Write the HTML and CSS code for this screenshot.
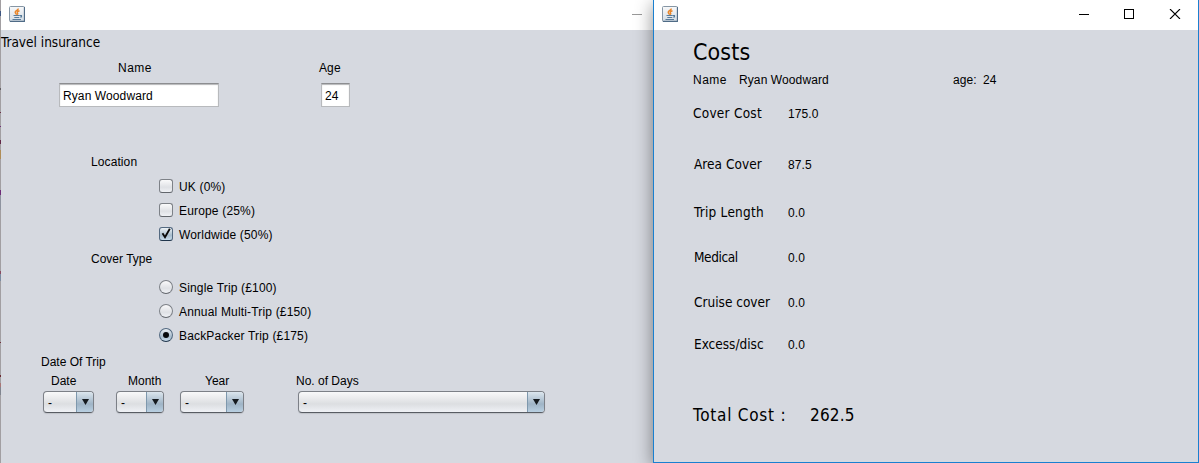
FILE: index.html
```html
<!DOCTYPE html>
<html lang="en">
<head>
<meta charset="utf-8">
<title>Travel insurance</title>
<link rel="stylesheet" href="styles.css">
</head>
<body>
<svg width="0" height="0" class="defs">
  <defs>
    <linearGradient id="tile" x1="0" y1="0" x2="0" y2="1"><stop offset="0" stop-color="#f8f9fa"/><stop offset="1" stop-color="#d3dce4"/></linearGradient>
    <symbol id="java" viewBox="0 0 16 16">
      <rect x=".5" y=".5" width="15" height="15" rx="1" fill="url(#tile)" stroke="#8696a5"/>
      <path d="M1 15.4h14.4V1" fill="none" stroke="#4f6b86" stroke-width="1.1"/>
      <path d="M9.300 2.500C9.600 4.200 5.900 4.500 6.200 6.400c.1 1 1.200 1.500 1.500 2.400M10.500 4.800C8.300 5.400 7.700 6.100 8.500 7c.5.600.2 1.300-.3 1.700" fill="none" stroke="#e9862a" stroke-width="1.400"/>
      <path d="M4.500 9.500h6.300M5.300 11.500h5M3.500 13.500h8.500M11 9.500h1.500v1.500H11" fill="none" stroke="#587c9b" stroke-width="1.100"/>
    </symbol>
  </defs>
</svg>
<div class="desktop">
  <section class="window form">
    <header class="titlebar">
      <svg class="java"><use href="#java"/></svg>
      <svg class="min" width="10" height="1"><rect width="10" height="1" fill="#999"/></svg>
    </header>
    <h1 class="heading">Travel insurance</h1>
    <div class="labels"><label class="name-label wide">Name</label><label>Age</label></div>
    <div class="inputs"><div class="input name-input">Ryan Woodward</div><div class="input age-input">24</div></div>
    <div class="group location">Location</div>
    <div class="options">
      <div class="option"><i class="box"></i><span>UK (0%)</span></div>
      <div class="option"><i class="box"></i><span>Europe (25%)</span></div>
      <div class="option"><i class="box on"><svg width="12" height="12"><path d="M2.500 5.300 5 9.200 9.800 .8" fill="none" stroke="#080808" stroke-width="1.800"/></svg></i><span>Worldwide (50%)</span></div>
    </div>
    <div class="group cover">Cover Type</div>
    <div class="options radios">
      <div class="option"><i class="box round"></i><span>Single Trip (£100)</span></div>
      <div class="option"><i class="box round"></i><span>Annual Multi-Trip (£150)</span></div>
      <div class="option"><i class="box round on"><b class="dot"></b></i><span>BackPacker Trip (£175)</span></div>
    </div>
    <div class="trip">Date Of Trip</div>
    <div class="pickers">
      <div class="picker date"><label>Date</label><div class="combo"><span>-</span><i class="arrow"><svg width="7" height="6"><path d="M0 0h7L3.500 6z" fill="#151a1f"/></svg></i></div></div>
      <div class="picker month"><label>Month</label><div class="combo"><span>-</span><i class="arrow"><svg width="7" height="6"><path d="M0 0h7L3.500 6z" fill="#151a1f"/></svg></i></div></div>
      <div class="picker year"><label>Year</label><div class="combo"><span>-</span><i class="arrow"><svg width="7" height="6"><path d="M0 0h7L3.500 6z" fill="#151a1f"/></svg></i></div></div>
      <div class="picker days"><label>No. of Days</label><div class="combo"><span>-</span><i class="arrow"><svg width="7" height="6"><path d="M0 0h7L3.500 6z" fill="#151a1f"/></svg></i></div></div>
    </div>
  </section>
  <section class="window costs">
    <header class="titlebar">
      <svg class="java"><use href="#java"/></svg>
      <svg class="controls" width="102" height="10" shape-rendering="crispEdges"><path d="M0 5.500h10M45.500.500h9v9h-9z" fill="none" stroke="#000"/><path d="M91 0l10 10M101 0l-10 10" fill="none" stroke="#000" shape-rendering="auto" stroke-width="1.100"/></svg>
    </header>
    <h2 class="costs-title">Costs</h2>
    <div class="person"><span class="key wide">Name</span><span class="who">Ryan Woodward</span><span class="age">age:</span><span>24</span></div>
    <dl class="items">
      <dt class="first">Cover Cost</dt><dd>175.0</dd>
      <dt class="area">Area Cover</dt><dd class="area-value">87.5</dd>
      <dt>Trip Length</dt><dd>0.0</dd>
      <dt class="medical">Medical</dt><dd>0.0</dd>
      <dt class="tight">Cruise cover</dt><dd>0.0</dd>
      <dt class="tight">Excess/disc</dt><dd>0.0</dd>
    </dl>
    <div class="total"><span class="total-key">Total Cost :</span><span class="total-value">262.5</span></div>
  </section>
</div>
</body>
</html>
```
FILE: styles.css
```css
* { box-sizing: border-box; }
body { margin: 0; overflow: hidden; font: 12px/16px "Liberation Sans", Arial, sans-serif; letter-spacing: .1px; color: #000; white-space: nowrap; }
.defs { display: block; }
.desktop { display: flex; height: 463px; overflow: hidden; }
.window { background: #d6d9e0; height: 463px; }
.form {
  width: 653px; border-left: 1px solid;
  border-image: linear-gradient(#a29fa2 12px, #3d5580 12px 17px, #a29fa2 17px 89px, #625f63 89px 91px, #a29fa2 91px 113px, #6b3045 113px 114px, #a29fa2 114px 126px, #70307a 126px 127px, #a29fa2 127px 140px, #632848 140px 144px, #a29fa2 144px 150px, #b08d57 150px 159px, #a29fa2 159px 190px, #6e2b78 190px 195px, #8e939f 195px 210px, #a29fa2 210px 271px, #8a4a60 271px 274px, #7b8ba0 274px 281px, #a29fa2 281px 342px, #70303a 342px 343px, #a29fa2 343px 374px, #6b2830 374px 376px, #a29fa2 376px 382px, #a97676 382px 386px, #80858f 386px 394px, #a29fa2 394px) 1;
}
.costs { width: 546px; border: solid #1a80d0; border-width: 0 1px 1px; box-shadow: 0 4px 17px rgba(0,0,0,.44); }
.titlebar { display: flex; align-items: center; height: 30px; background: #fff; padding-left: 8px; }
.java { width: 16px; height: 16px; margin-top: -2px; }
.min { margin-left: 607px; margin-top: -1px; }
.controls { margin-left: 401px; margin-top: -2px; }
.heading, .costs-title, dt, .total { font-family: "DejaVu Sans Condensed", "DejaVu Sans", Tahoma, sans-serif; font-stretch: condensed; font-weight: 400; }
.heading { font-size: 13.500px; line-height: 16px; margin: 4px 0 10px; letter-spacing: 0; }
.labels { display: flex; padding-left: 117px; height: 16px; }
.wide { letter-spacing: .5px; }
.name-label { width: 201px; }
.inputs { display: flex; gap: 102px; padding-left: 58px; margin-top: 7px; }
.input { height: 24px; padding: 4px 3px 2px; line-height: 17px; background: #fff; border: 1px solid #b8babd; border-top: 1px solid #8c8d90; box-shadow: inset 0 1px 1px #b5b6b8; }
.name-input { width: 160px; }
.age-input { width: 29px; }
.group { padding-left: 90px; }
.location { margin-top: 47px; }
.cover { margin-top: 5px; letter-spacing: 0; }
.options { padding-left: 158px; margin-top: 4px; letter-spacing: .17px; }
.radios { margin-top: 8px; }
.option { display: flex; align-items: center; gap: 6px; height: 24px; }
.option span { padding-top: 2px; }
.box { display: flex; align-items: center; justify-content: center; width: 14px; height: 14px; border: 1px solid #7d8187; border-bottom-color: #62666c; border-radius: 3px; background: linear-gradient(#fafafb, #dfe1e5 60%, #f0f2f6); }
.box.on { background: linear-gradient(#edf2f6, #a8bccc 60%, #c7dcec); border-color: #536980; border-bottom-color: #1f354b; }
.box.round { border-radius: 50%; }
.dot { width: 6px; height: 6px; border-radius: 50%; background: #06090c; }
.trip { padding-left: 40px; margin-top: 7px; letter-spacing: 0; }
.pickers { display: flex; padding-left: 42px; margin-top: 3px; letter-spacing: 0; }
.picker { display: flex; flex-direction: column; gap: 2px; }
.date { width: 51px; margin-right: 22px; }
.month { width: 48px; margin-right: 16px; }
.year { width: 64px; margin-right: 54px; }
.days { width: 247px; }
.date label { padding-left: 8px; }
.month label { padding-left: 12px; }
.year label { padding-left: 25px; }
.days label { margin-left: -2px; }
.combo { display: flex; justify-content: space-between; height: 22px; border: 1px solid #7c8087; border-bottom-color: #585c63; border-radius: 4px; background: linear-gradient(#f9f9fa, #dcdee1 60%, #eff1f5); overflow: hidden; box-shadow: 0 1px 1px #bfc2c8; }
.combo span { padding: 3px 0 0 4px; line-height: 16px; }
.arrow { display: flex; align-items: center; justify-content: center; width: 17px; border-left: 1px solid #7e98ad; background: linear-gradient(#dce6ee, #9fb4c6 60%, #b9d0e2); }
.costs-title { font-size: 23px; line-height: 28px; margin: 8px 0 6px 39px; letter-spacing: .1px; }
.person { display: flex; padding-left: 39px; }
.key { width: 46px; }
.who { width: 214px; }
.age { width: 30px; }
.items { display: grid; grid-template-columns: 94px auto; grid-template-rows: 50px 49px 45px 45px 42px 54px; margin: 17px 0 0 40px; }
dt { font-size: 13.500px; letter-spacing: .25px; }
.first { margin-left: -1px; }
.area { padding-top: 1px; letter-spacing: .05px; }
.medical { letter-spacing: -.4px; }
.tight { letter-spacing: 0; }
dd { margin: 1px 0 0; }
.area-value { padding-top: 1px; }
.total { display: flex; padding-left: 39px; margin-top: 14px; font-size: 17px; line-height: 22px; letter-spacing: .2px; }
.total-key { width: 117px; letter-spacing: .75px; }
```
